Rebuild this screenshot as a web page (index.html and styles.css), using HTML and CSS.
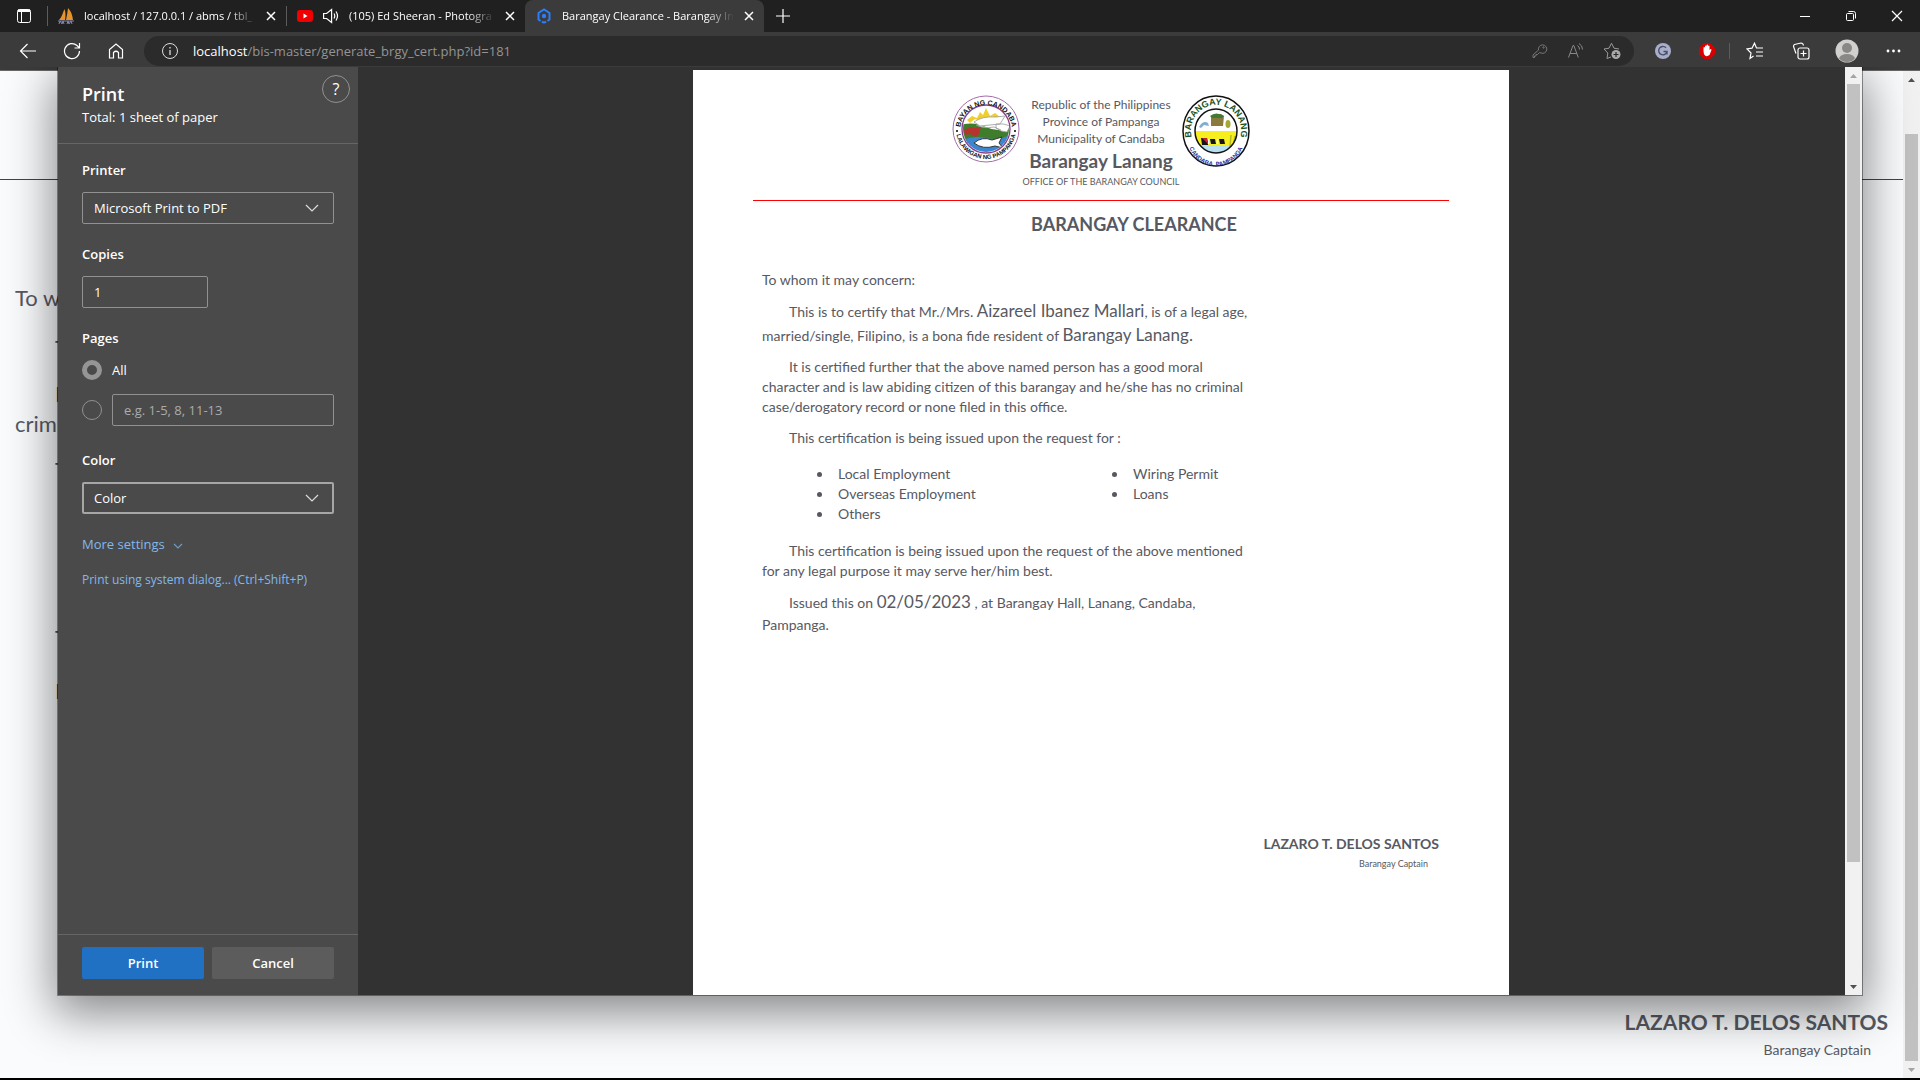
FILE: index.html
```html
<!DOCTYPE html>
<html lang="en">
<head>
<meta charset="utf-8">
<title>Barangay Clearance</title>
<link rel="stylesheet" href="styles.css">
</head>
<body>
<div class="browser">
  <header class="tabstrip">
    <button class="tab-actions" aria-label="Tab actions">
      <svg width="16" height="16" viewBox="0 0 16 16" fill="none" stroke="#fff"><rect x="1.500" y="1.500" width="13" height="13" rx="2"/><path d="M2 3.500h12M5.500 4v10" /><path d="M2 2.500h12" stroke-width="2"/></svg>
    </button>
    <div class="tab">
      <svg class="favicon" width="16" height="16" viewBox="0 0 16 16"><path d="M1 12C4 9 5 4 6.500 1 8 5 7.500 9 7 12zM8 12C9 8 9.500 4 10 0c3 3 4.500 7 5 12z" fill="#e5932c"/><path d="M0 13h16M1 16l1-3 2 3 1-3 1 3M9 16l1-3 1 3 2-3 1 3" stroke="#8587b5" fill="none"/></svg>
      <span class="tab-title">localhost / 127.0.0.1 / abms / tbl_</span>
      <button class="tab-close" aria-label="Close tab"><svg width="10" height="10" viewBox="0 0 10 10"><path d="M1 1l8 8M9 1l-8 8" stroke="#fff" stroke-width="1.500"/></svg></button>
    </div>
    <div class="tab">
      <svg class="favicon" width="16" height="16" viewBox="0 0 16 16"><rect y="2" width="16" height="12" rx="3" fill="#f00000"/><path d="M6.500 5.500v5L10.500 8z" fill="#fff"/></svg>
      <svg width="16" height="18" viewBox="0 0 16 18" fill="none" stroke="#fff" stroke-width="1.200"><path d="M.6 6.500v5h3l5 4v-13l-5 4zM11 6.500q1.500 2.500 0 5M13 4.500q3 4.500 0 9"/></svg>
      <span class="tab-title">(105) Ed Sheeran - Photogra</span>
      <button class="tab-close" aria-label="Close tab"><svg width="10" height="10" viewBox="0 0 10 10"><path d="M1 1l8 8M9 1l-8 8" stroke="#fff" stroke-width="1.500"/></svg></button>
    </div>
    <div class="tab tab-active">
      <svg class="favicon" width="16" height="16" viewBox="0 0 16 16" fill="none" stroke="#2d7df6" stroke-width="2"><path d="M4.500 13l-2-1.500V5L8 1.500 13.500 5v6.500l-2 1.500"/><circle cx="8" cy="8" r="2.200" fill="#2d7df6" stroke="none"/><path d="M6 13.500q2 2 4 0"/></svg>
      <span class="tab-title">Barangay Clearance - Barangay In</span>
      <button class="tab-close" aria-label="Close tab"><svg width="10" height="10" viewBox="0 0 10 10"><path d="M1 1l8 8M9 1l-8 8" stroke="#fff" stroke-width="1.500"/></svg></button>
    </div>
    <button class="new-tab" aria-label="New tab"><svg width="14" height="14" viewBox="0 0 14 14"><path d="M7 0v14M0 7h14" stroke="#fff" stroke-width="1.200"/></svg></button>
    <div class="window-controls">
      <button aria-label="Minimize"><svg width="12" height="12" viewBox="0 0 12 12"><path d="M1 6.500h10" stroke="#fff"/></svg></button>
      <button aria-label="Restore"><svg width="12" height="12" viewBox="0 0 12 12" fill="none" stroke="#fff"><rect x="1.500" y="3.500" width="7" height="7" rx="1"/><path d="M3.500 1.500h5q2 0 2 2v5"/></svg></button>
      <button aria-label="Close"><svg width="12" height="12" viewBox="0 0 12 12"><path d="M1 1l10 10M11 1L1 11" stroke="#fff" stroke-width="1.200"/></svg></button>
    </div>
  </header>

  <nav class="toolbar">
    <div class="nav-buttons">
      <button aria-label="Back"><svg width="18" height="18" viewBox="0 0 18 18" fill="none" stroke="#fff" stroke-width="1.200"><path d="M17 9H1.500M8.500 2l-7 7 7 7"/></svg></button>
      <button aria-label="Refresh"><svg width="18" height="18" viewBox="0 0 18 18" fill="none" stroke="#fff" stroke-width="1.200"><path d="M16.500 9A7.500 7.500 0 1 1 14 3.500L16.300 5.800M16.500 1v5h-5"/></svg></button>
      <button aria-label="Home"><svg width="18" height="18" viewBox="0 0 18 18" fill="none" stroke="#fff" stroke-width="1.200"><path d="M2.500 16V7.500L9 2l6.500 5.500V16h-4v-5.500q-2.500-2.500-5 0V16z"/></svg></button>
    </div>
    <div class="address">
      <svg width="18" height="18" viewBox="0 0 18 18" fill="none" stroke="#ddd"><circle cx="9" cy="9" r="7.500"/><path d="M9 8v5M9 5v1.500" stroke-width="1.300"/></svg>
      <span class="url"><span class="url-host">localhost</span>/bis-master/generate_brgy_cert.php?id=181</span>
      <div class="address-icons">
        <button aria-label="Password"><svg width="18" height="18" viewBox="0 0 18 18" fill="none" stroke="#777"><path d="M8.500 10.500L6.500 12.500H5V14H3.500v1.500H2v-2.500L7.500 8A4.200 4.200 0 1 1 10 11z"/><circle cx="12.500" cy="5.500" r=".7"/></svg></button>
        <button aria-label="Read aloud"><svg width="18" height="18" viewBox="0 0 18 18" fill="none" stroke="#888"><path d="M1.500 15.500L6 3.500h.8l4.500 12M3 11.500h7M10.500 3.500q2 1 2 4M12 1.500q3.500 2 3.500 6"/></svg></button>
        <button aria-label="Add to favorites"><svg width="18" height="18" viewBox="0 0 18 18"><path d="M8 15L4 16.500l.8-5.500L1 7l5-.8 2.500-5 2.500 5 5 .8" fill="none" stroke="#999"/><circle cx="13" cy="12.500" r="4.500" fill="#aaa"/><path d="M13 10v5M10.500 12.500h5" stroke="#2b2b2b" stroke-width="1.200"/></svg></button>
      </div>
    </div>
    <div class="extensions">
      <button aria-label="Grammar extension"><svg width="18" height="18" viewBox="0 0 18 18" fill="none"><circle cx="9" cy="9" r="8" fill="#a9afcb"/><path d="M12 5.800A4.200 4.200 0 1 0 13 9.500H9.500M13 9.500v3" stroke="#4b5068" stroke-width="1.400"/></svg></button>
      <button aria-label="Ad blocker"><svg width="18" height="18" viewBox="0 0 18 18"><path d="M6 1h6l5 5v6l-5 5H6l-5-5V6z" fill="#d80000"/><path d="M5.500 5.500q1-1 1.500 0V4q1-1 1.500 0V3q1-1 1.500 0v1q1-1 1.500 0v4l1-1q1 0 1 1L11.500 13Q9 15 7 13.500 5.500 12 5.500 9z" fill="#fff"/></svg></button>
    </div>
    <div class="browser-tools">
      <button aria-label="Favorites"><svg width="18" height="18" viewBox="0 0 18 18" fill="none" stroke="#fff" stroke-width="1.200"><path d="M7.500 14L4 16.500l1-5.500L1 7l5-.8 2.500-5L10.500 6H17M10 10h7M10 14h7"/></svg></button>
      <button aria-label="Collections"><svg width="18" height="18" viewBox="0 0 18 18" fill="none" stroke="#fff" stroke-width="1.200"><rect x="6" y="6" width="11" height="11" rx="2"/><path d="M11.500 8.500v6M8.500 11.500h6M4 11.500L1.500 4.500q0-1.500 1-2L9 1q2 0 2.500 2.500"/></svg></button>
      <button aria-label="Profile"><svg width="24" height="24" viewBox="0 0 24 24"><defs><clipPath id="avatar"><circle cx="12" cy="12" r="11"/></clipPath></defs><circle cx="12" cy="12" r="11.500" fill="#d2d0ce"/><g clip-path="url(#avatar)" fill="#8a8886"><circle cx="12" cy="9" r="5"/><ellipse cx="12" cy="20" rx="8" ry="5"/></g></svg></button>
      <button aria-label="Settings and more"><svg width="18" height="18" viewBox="0 0 18 18" fill="#fff"><circle cx="4" cy="9" r="1.400"/><circle cx="9.500" cy="9" r="1.400"/><circle cx="15" cy="9" r="1.400"/></svg></button>
    </div>
  </nav>

  <main class="viewport">
    <div class="page">
      <div class="page-rule"></div>
      <div class="page-letter">
        <p>To whom it may concern:</p>
        <p class="indent">This is to certify that</p>
        <p class="indent">It is certified further that the</p>
        <p>criminal case/derogatory record</p>
        <p class="indent">This certification is being issued</p>
        <p class="indent late">This certification is being issued</p>
        <p class="indent">Issued this on</p>
      </div>
      <div class="page-sign">
        <strong>LAZARO T. DELOS SANTOS</strong>
        <span>Barangay Captain</span>
      </div>
    </div>
    <div class="scrollbar page-scroll">
      <svg width="17" height="17" viewBox="0 0 17 17"><path d="M5 11h7L8.500 7z" fill="#505050"/></svg>
      <div class="track"><div class="thumb"></div></div>
      <svg width="17" height="17" viewBox="0 0 17 17"><path d="M5 7h7l-3.500 4z" fill="#a3a3a3"/></svg>
    </div>
  </main>

  <section class="dialog" role="dialog" aria-label="Print">
    <form class="settings">
      <div class="settings-head">
        <div>
          <h1>Print</h1>
          <p>Total: 1 sheet of paper</p>
        </div>
        <button type="button" class="help" aria-label="Help">?</button>
      </div>
      <div class="settings-body">
        <div class="field">
          <label for="printer">Printer</label>
          <div class="select">
            <select id="printer"><option>Microsoft Print to PDF</option></select>
            <svg width="14" height="8" viewBox="0 0 14 8"><path d="M1 1l6 6 6-6" fill="none" stroke="#ddd" stroke-width="1.200"/></svg>
          </div>
        </div>
        <div class="field">
          <label for="copies">Copies</label>
          <input class="box copies" id="copies" type="text" value="1">
        </div>
        <fieldset class="field pages">
          <legend>Pages</legend>
          <label class="choice"><input type="radio" name="pages" checked> All</label>
          <div class="choice">
            <input type="radio" name="pages" aria-label="Page range">
            <input class="box" type="text" aria-label="Pages to print" placeholder="e.g. 1-5, 8, 11-13">
          </div>
        </fieldset>
        <div class="field">
          <label for="color">Color</label>
          <div class="select focused">
            <select id="color"><option>Color</option></select>
            <svg width="14" height="8" viewBox="0 0 14 8"><path d="M1 1l6 6 6-6" fill="none" stroke="#ddd" stroke-width="1.200"/></svg>
          </div>
        </div>
        <a class="more" href="#more">More settings <svg width="10" height="6" viewBox="0 0 10 6"><path d="M1 1l4 4 4-4" fill="none" stroke="#6b9cc8" stroke-width="1.200"/></svg></a>
        <a class="system" href="#system">Print using system dialog... (Ctrl+Shift+P)</a>
      </div>
      <div class="settings-foot">
        <button type="submit" class="primary">Print</button>
        <button type="button">Cancel</button>
      </div>
    </form>

    <div class="preview">
      <article class="sheet">
        <header class="letterhead">
          <svg class="seal" width="68" height="68" viewBox="0 0 68 68">
            <defs>
              <path id="l-top" d="M8 36a26 26 0 1 1 52 0"/>
              <path id="l-bottom" d="M4 34a30 30 0 0 0 60 0"/>
              <clipPath id="l-clip"><circle cx="34" cy="34" r="23"/></clipPath>
            </defs>
            <circle cx="34" cy="34" r="33" fill="#fff" stroke="#a66bab"/>
            <g clip-path="url(#l-clip)">
              <rect width="68" height="68" fill="#fff"/>
              <path d="M8 30q14-4 26 2t26 0v16H8z" fill="#3f7d2c"/>
              <path d="M8 46q12-6 26-3t26-4v22H8z" fill="#3b86cf"/>
              <path d="M15 25l5-4 5 2 3-6 3 3 3-7 4 8 5-3 5 4-4 4-6-2-8 3-7-3-5 4z" fill="#f0cf2a"/>
              <path d="M22 27q8-6 22-5l9-1-5 8-20 2zM24 30q7 4 18 2l7 3M44 29q8-1 14 2l-3 6q-6 0-11-4z" fill="#fff" stroke="#999" stroke-width=".8"/>
              <path d="M12 35l6-3 5 1 6-1-2 7-3 3-6-3-5 1z" fill="#b8332d"/>
              <path d="M22 48q8-7 18-3l10-3-3 6 4 5-8-2q-12 4-21-3z" fill="#fff" stroke="#333"/>
            </g>
            <circle cx="34" cy="34" r="24" fill="none" stroke="#853d8e" stroke-width="1.300"/>
            <circle cx="5" cy="36" r="1"/><circle cx="63" cy="36" r="1"/>
            <text class="seal-text"><textPath href="#l-top" startOffset="50%" text-anchor="middle">BAYAN NG CANDABA</textPath></text>
            <text class="seal-small"><textPath href="#l-bottom" startOffset="50%" text-anchor="middle">LALAWIGAN NG PAMPANGA</textPath></text>
          </svg>
          <div class="office">
            <span>Republic of the Philippines</span>
            <span>Province of Pampanga</span>
            <span>Municipality of Candaba</span>
            <strong>Barangay Lanang</strong>
            <small>OFFICE OF THE BARANGAY COUNCIL</small>
          </div>
          <svg class="seal" width="68" height="72" viewBox="0 0 68 72">
            <defs>
              <path id="r-top" d="M13 50a25 26 0 1 1 42 0"/>
              <path id="r-bottom" d="M5 41a29 30 0 0 0 58 0"/>
              <clipPath id="r-clip"><ellipse cx="34" cy="36" rx="21" ry="22"/></clipPath>
            </defs>
            <ellipse cx="34" cy="36" rx="33" ry="35" fill="#fff" stroke="#111" stroke-width="1.500"/>
            <g clip-path="url(#r-clip)">
              <rect width="68" height="72" fill="#fff"/>
              <rect y="36" width="68" height="16" fill="#f7ee20"/>
              <rect y="50" width="68" height="10" fill="#b9dff0"/>
              <path d="M29 21l4-2h6l3 2-1 10H29z" fill="#8a7a3e"/><path d="M28 21q6-5 14 0l-2 2H30z" fill="#427a35"/>
              <path d="M17 32q4-7 9-4l1 3-5-1-3 3z" fill="#80afd0"/><ellipse cx="46" cy="29" rx="2.500" ry="4" fill="#a7a832"/>
              <path d="M19 43h6l1 3v4h-6zM28 44h5l1 5h-5zM37 44h5l1 5h-5z" fill="#151515"/><path d="M20 43h5v5z" fill="#c2232e"/>
              <path d="M26.500 44v5M35.500 44v5" stroke="#fff" stroke-width="1.500"/>
              <path d="M48 52l1-12M51 52l2-11" stroke="#b3bb26" stroke-width="1.500"/>
            </g>
            <ellipse cx="34" cy="36" rx="21" ry="22" fill="none" stroke="#111" stroke-width="1.500"/>
            <text class="seal-green"><textPath href="#r-top" startOffset="50%" text-anchor="middle">BARANGAY LANANG</textPath></text>
            <text class="seal-blue"><textPath href="#r-bottom" startOffset="50%" text-anchor="middle">CANDABA, PAMPANGA</textPath></text>
          </svg>
        </header>
        <h2>BARANGAY CLEARANCE</h2>
        <div class="letter">
          <p class="flush">To whom it may concern:</p>
          <p class="roomy">This is to certify that Mr./Mrs. <span class="entry">Aizareel Ibanez Mallari</span>, is of a legal age, married/single, Filipino, is a bona fide resident of <span class="entry">Barangay Lanang.</span></p>
          <p>It is certified further that the above named person has a good moral character and is law abiding citizen of this barangay and he/she has no criminal case/derogatory record or none filed in this office.</p>
          <p>This certification is being issued upon the request for :</p>
          <div class="purposes">
            <ul><li>Local Employment</li><li>Overseas Employment</li><li>Others</li></ul>
            <ul><li>Wiring Permit</li><li>Loans</li></ul>
          </div>
          <p>This certification is being issued upon the request of the above mentioned for any legal purpose it may serve her/him best.</p>
          <p class="issued">Issued this on <span class="entry">02/05/2023</span> , at Barangay Hall, Lanang, Candaba, Pampanga.</p>
        </div>
        <footer class="sign">
          <strong>LAZARO T. DELOS SANTOS</strong>
          <span>Barangay Captain</span>
        </footer>
      </article>
    </div>
    <div class="scrollbar dialog-scroll">
      <svg width="17" height="17" viewBox="0 0 17 17"><path d="M5 11h7L8.500 7z" fill="#a3a3a3"/></svg>
      <div class="track"><div class="thumb"></div></div>
      <svg width="17" height="17" viewBox="0 0 17 17"><path d="M5 7h7l-3.500 4z" fill="#505050"/></svg>
    </div>
  </section>
</div>
</body>
</html>
```
FILE: styles.css
```css
* { box-sizing: border-box; }
html, body { height: 100%; }
body {
  margin: 0;
  font: 13px/20px "Open Sans", "Noto Sans", sans-serif;
  color: #fff;
  background: #000;
  overflow: hidden;
}
button, input, select { font: inherit; color: inherit; }
button { display: flex; align-items: center; justify-content: center; padding: 0; border: 0; background: none; }
h1, h2, p, ul, fieldset { margin: 0; padding: 0; border: 0; }
svg { display: block; flex: none; }

.browser { position: relative; display: flex; flex-direction: column; height: 100vh; padding-bottom: 2px; }

/* Tab strip */
.tabstrip { display: flex; flex: none; height: 32px; background: #202020; font-size: 11px; }
.tab-actions { width: 47px; }
.tab { display: flex; align-items: center; gap: 10px; flex: 0 1 239px; min-width: 0; padding: 0 10px 0 11px; position: relative; }
.tab:not(.tab-active)::before { content: ""; position: absolute; left: 0; top: 6px; bottom: 6px; width: 1px; background: #5c5c5c; }
.tab-active { background: #3b3b3b; border-radius: 8px 8px 0 0; }
.tab-title { flex: 1; overflow: hidden; white-space: nowrap; -webkit-mask-image: linear-gradient(to left, transparent, #000 28px); mask-image: linear-gradient(to left, transparent, #000 28px); }
.tab-close { width: 10px; height: 10px; }
.new-tab { width: 38px; }
.window-controls { display: flex; margin-left: auto; }
.window-controls button { width: 46px; height: 32px; }

/* Toolbar */
.toolbar { display: flex; align-items: center; flex: none; height: 39px; background: #3b3b3b; border-bottom: 1px solid #676767; }
.nav-buttons { display: flex; padding: 0 6px; }
.nav-buttons button, .extensions button { width: 44px; height: 30px; }
.address { display: flex; align-items: center; flex: 1; gap: 14px; height: 30px; padding: 0 13px 0 17px; border-radius: 15px; background: #2b2b2b; }
.url { flex: 1; color: #949494; font-size: 13px; }
.url-host { color: #fff; }
.address-icons { display: flex; gap: 18px; }
.extensions { display: flex; padding: 0 0 0 7px; border-right: 1px solid #5c5c5c; height: 16px; align-items: center; }
.browser-tools { display: flex; padding: 0 4px 0 2px; }
.browser-tools button { width: 46px; height: 30px; }

/* Web page behind the dialog */
.viewport { display: flex; flex: 1; min-height: 0; }
.page { display: flex; flex-direction: column; flex: 1; min-width: 0; background: #f9fbfd; color: #575962; font-family: Lato, sans-serif; font-size: 22px; line-height: 30px; overflow: hidden; }
.page-rule { flex: none; margin-top: 108px; border-top: 1px solid #e00000; }
.page-letter { padding: 103px 15px 0; }
.page-letter p { margin-bottom: 16px; white-space: nowrap; }
.page-letter p:first-child { margin-bottom: 20px; }
.page-letter p:nth-child(3) { margin-bottom: 0; }
.page-letter .indent { padding-left: 40px; }
.page-letter .late { margin-top: 138px; margin-bottom: 23px; }
.page-sign { display: flex; flex-direction: column; align-items: flex-end; margin-top: auto; padding: 0 15px 15px 0; }
.page-sign strong { font-size: 21px; }
.page-sign span { padding-right: 17px; font-size: 14px; line-height: 26px; }

.scrollbar { display: flex; flex-direction: column; flex: none; width: 17px; background: #f1f1f1; }
.track { flex: 1; padding: 0 2px; }
.thumb { height: 100%; background: #c1c1c1; }
.page-scroll .track { padding-top: 46px; }
.dialog-scroll .track { padding-bottom: 116px; }

/* Print dialog */
.dialog { position: absolute; inset: 67px 58px 85px; display: flex; background: #323232; box-shadow: 0 0 0 1px #0006, 0 14px 44px 4px #0007; clip-path: inset(0 -58px -85px); }
.settings { display: flex; flex-direction: column; flex: none; width: 300px; background: #4a4a4a; }
.settings-head { display: flex; justify-content: space-between; height: 77px; padding: 8px 8px 0 24px; border-bottom: 1px solid #666; }
.settings-head h1 { padding-top: 7px; font-size: 18px; line-height: 24px; font-weight: 600; }
.settings-head p { line-height: 22px; }
.help { width: 28px; height: 28px; border: 1px solid #919191; border-radius: 50%; font-size: 16px; }
.settings-body { display: flex; flex-direction: column; flex: 1; align-items: flex-start; padding: 14px 24px 0; }
.field { display: flex; flex-direction: column; width: 100%; height: 84px; gap: 10px; }
.field > label, legend { padding: 0; font-weight: 600; line-height: 24px; }
.field > .choice { font-weight: 400; }
.select { position: relative; display: flex; align-items: center; }
.select select { appearance: none; width: 100%; height: 32px; padding: 0 11px; border: 1px solid #919191; border-radius: 2px; background: none; }
.select svg { position: absolute; right: 15px; pointer-events: none; }
.focused select { padding: 0 10px; border: 2px solid #a6a6a6; }
.box { flex: 1; min-width: 0; height: 32px; padding: 0 11px; border: 1px solid #919191; border-radius: 2px; background: none; }
.box::placeholder { color: #ababab; opacity: 1; }
.copies { flex: none; width: 126px; }
.pages { display: block; height: 122px; }
.choice { display: flex; align-items: center; gap: 10px; height: 32px; margin-top: 8px; }
legend + .choice { margin-top: 4px; }
.choice input[type="radio"] { appearance: none; flex: none; width: 20px; height: 20px; margin: 0; border: 1px solid #919191; border-radius: 50%; }
.choice input[type="radio"]:checked { border: 5px solid #959595; }
.settings a { color: #82b8ea; text-decoration: none; }
.more { display: flex; align-items: center; gap: 8px; line-height: 24px; }
.more svg { margin-top: 4px; }
.system { margin-top: 14px; font-size: 12px; line-height: 20px; }
.settings-foot { display: flex; gap: 8px; height: 61px; padding: 12px 24px 0; border-top: 1px solid #666; }
.settings-foot button { flex: 1; height: 32px; border-radius: 2px; background: #5c5c5c; font-weight: 600; }
.settings-foot .primary { background: #2070c4; }

/* Paper preview */
.preview { display: flex; flex: 1; justify-content: center; min-width: 0; padding: 3px 1px 0 0; }
.sheet { display: flex; flex-direction: column; width: 816px; padding: 0 60px; background: #fff; color: #575962; font: 14px/20px Lato, sans-serif; }
.letterhead { display: flex; justify-content: center; height: 131px; padding-top: 25px; border-bottom: 1px solid #f00; }
.office { display: flex; flex-direction: column; align-items: center; width: 162px; padding-top: 1px; font-size: 12px; line-height: 17px; white-space: nowrap; }
.office strong { font-size: 19px; line-height: 28px; }
.office small { font-size: 9px; line-height: 14px; }
.seal-text, .seal-small, .seal-green, .seal-blue { font: 700 7px "Liberation Sans", sans-serif; fill: #111; }
.seal-small { font-size: 6px; }
.seal-green { font-size: 9px; fill: #1d5220; }
.seal-blue { font-size: 6px; fill: #2b2b9b; }
.sheet h2 { padding: 11px 0 0 66px; font-size: 18px; line-height: 24px; text-align: center; }
.letter { width: 512px; padding: 34px 10px 0 9px; }
.letter p { margin-bottom: 11px; text-indent: 27px; }
.letter .flush { margin-bottom: 10px; text-indent: 0; }
.letter .roomy { line-height: 24px; margin-bottom: 9px; }
.letter .issued { line-height: 22px; }
.entry { font-size: 17px; line-height: 20px; }
.purposes { display: grid; grid-template-columns: 295px 1fr; padding: 5px 0 17px 37px; }
.purposes ul { padding-left: 34px; }
.purposes li { padding-left: 5px; }
.sign { display: flex; flex-direction: column; align-items: flex-end; margin-top: auto; padding: 0 10px 121px 0; }
.sign span { padding-right: 11px; font-size: 9px; }
```
